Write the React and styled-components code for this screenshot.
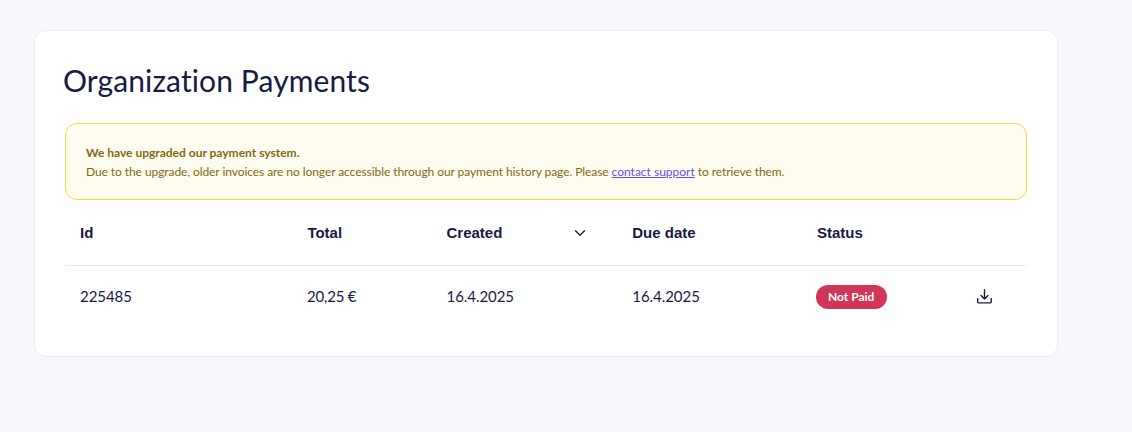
import React from "react";
import styled, { createGlobalStyle } from "styled-components";

const GlobalStyle = createGlobalStyle`
  * { box-sizing: border-box; }
  body {
    margin: 0;
    background: #f7f8fc;
    color: #171a43;
    font-family: Lato, "Liberation Sans", sans-serif;
    font-variant-ligatures: none;
  }
`;

const Page = styled.main`
  min-height: 432px;
  padding: 30px 74px 0 34px;
`;

const Card = styled.section`
  height: 327px;
  padding: 29px 30px 0;
  background: #fff;
  border: 1px solid #ebedf7;
  border-radius: 12px;
`;

const Title = styled.h1`
  margin: 0 0 23px -2px;
  font-size: 30px;
  line-height: 40px;
  font-weight: 400;
  letter-spacing: 0.11px;
`;

const Notice = styled.div`
  height: 77px;
  padding: 19px 20px;
  color: #806a16;
  background: #fffdef;
  border: 1px solid #f7d948;
  border-radius: 12px;
  font-size: 12px;
  line-height: 19px;
`;

const NoticeTitle = styled.strong`
  display: block;
  font-weight: 700;
`;

const NoticeText = styled.p`
  margin: 0;
  letter-spacing: -0.073px;
`;

const Link = styled.a`
  color: #644dff;
  letter-spacing: 0;
  text-decoration: underline;
`;

const Row = styled.div`
  display: grid;
  grid-template-columns: 227.4px 139.1px 185.8px 184.7px 144px 1fr;
  align-items: center;
`;

const HeadRow = styled(Row)`
  height: 66px;
  border-bottom: 1px solid #ebebeb;
  font: 700 15px/20px "Liberation Sans", Arial, sans-serif;
`;

const BodyRow = styled(Row)`
  height: 62px;
  font-size: 15px;
  line-height: 20px;
`;

const Cell = styled.div`
  display: flex;
  align-items: center;
  justify-content: space-between;
  padding: 0 ${(p) => p.$right ?? 15}px 0 ${(p) => p.$left ?? 15}px;
`;

const ValueCell = styled(Cell)`
  padding-bottom: 2px;
  letter-spacing: ${(p) => p.$spacing ?? -0.05}px;
`;

const Badge = styled.span`
  height: 24px;
  padding: 0 12.5px 0 12px;
  border-radius: 12px;
  background: #d1365a;
  color: #fff;
  font-size: 12px;
  line-height: 24px;
  font-weight: 700;
  white-space: nowrap;
`;

const IconButton = styled.button`
  display: flex;
  padding: 0;
  border: 0;
  background: none;
  color: inherit;
`;

const Icon = styled.svg`
  display: block;
  fill: none;
  stroke: currentColor;
  stroke-width: 1.4;
  stroke-linecap: round;
  stroke-linejoin: round;
`;

const payments = [
  { id: "225485", total: "20,25 €", created: "16.4.2025", due: "16.4.2025", status: "Not Paid" },
];

export default function App() {
  return (
    <>
      <GlobalStyle />
      <Page>
        <Card>
          <Title>Organization Payments</Title>
          <Notice>
            <NoticeTitle>We have upgraded our payment system.</NoticeTitle>
            <NoticeText>
              Due to the upgrade, older invoices are no longer accessible through our payment
              history page. Please <Link href="#">contact support</Link> to retrieve them.
            </NoticeText>
          </Notice>
          <HeadRow>
            <Cell>Id</Cell>
            <Cell>Total</Cell>
            <Cell $right={31}>
              Created
              <Icon width="12" height="12" viewBox="0 0 12 12" aria-hidden="true">
                <path d="M1.5 3.8L6 8.3l4.5-4.5" />
              </Icon>
            </Cell>
            <Cell>Due date</Cell>
            <Cell>Status</Cell>
            <Cell />
          </HeadRow>
          {payments.map((p) => (
            <BodyRow key={p.id}>
              <ValueCell>{p.id}</ValueCell>
              <ValueCell $left={14.6} $spacing={-0.2}>{p.total}</ValueCell>
              <ValueCell>{p.created}</ValueCell>
              <ValueCell>{p.due}</ValueCell>
              <Cell $left={14}>
                <Badge>{p.status}</Badge>
              </Cell>
              <Cell $left={30}>
                <IconButton aria-label="Download invoice">
                  <Icon width="16" height="16" viewBox="0 0 16 16" aria-hidden="true">
                    <path d="M8.5.8v9M5 6.5L8.5 10 12 6.5M1.7 9.6v3.1a1.2 1.2 0 0 0 1.2 1.2h11.1a1.2 1.2 0 0 0 1.2-1.2V9.6" />
                  </Icon>
                </IconButton>
              </Cell>
            </BodyRow>
          ))}
        </Card>
      </Page>
    </>
  );
}
